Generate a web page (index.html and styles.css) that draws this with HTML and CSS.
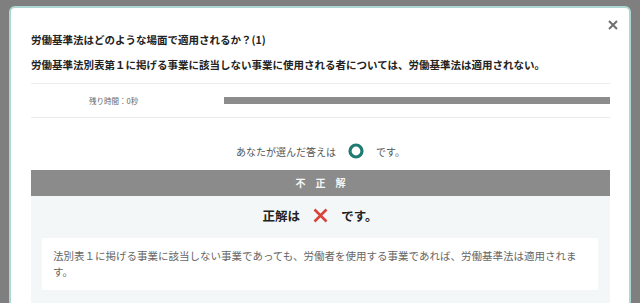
FILE: index.html
```html
<!DOCTYPE html>
<html lang="ja">
    <head>
        <meta charset="UTF-8">
        <title>労働基準法 一問一答</title>
        <link rel="stylesheet" href="styles.css">
    </head>
    <body>
        <div class="modal">
            <button class="close" aria-label="閉じる">
                <svg width="10" height="10" viewBox="0 0 10 10"><path d="M1 1L9 9M9 1L1 9" stroke="#6f6f6f" stroke-width="2" fill="none"/></svg>
            </button>
            <h2 class="title">労働基準法はどのような場面で適用されるか？(1)</h2>
            <p class="question">労働基準法別表第１に掲げる事業に該当しない事業に使用される者については、労働基準法は適用されない。</p>
            <div class="timer">
                <span class="timer-label">残り時間：0秒</span>
                <div class="timer-bar"></div>
            </div>
            <p class="your-answer">
                <span>あなたが選んだ答えは</span>
                <svg width="16" height="16" viewBox="0 0 16 16"><circle cx="8" cy="8" r="6" stroke="#1f7b71" stroke-width="3.2" fill="none"/></svg>
                <span>です。</span>
            </p>
            <div class="result-head">不正解</div>
            <div class="result">
                <p class="correct">
                    <span>正解は</span>
                    <svg width="15" height="15" viewBox="0 0 15 15"><path d="M1.5 1.5L13.5 13.5M13.5 1.5L1.5 13.5" stroke="#d8443a" stroke-width="2.6" fill="none"/></svg>
                    <span>です。</span>
                </p>
                <div class="explain">法別表１に掲げる事業に該当しない事業であっても、労働者を使用する事業であれば、労働基準法は適用されます。</div>
            </div>
        </div>
    </body>
</html>
```

FILE: styles.css
```css
* {
    box-sizing: border-box;
    font-family: "Noto Sans CJK JP", "Noto Sans", sans-serif;
}

body {
    margin: 0;
    padding: 6px 9px 0 9px;
    height: 303px;
    overflow: hidden;
    background: #7f7f7f;
}

.modal {
    position: relative;
    height: 420px;
    background: #fff;
    border: 2px solid #acd8d1;
    border-radius: 6px;
    padding: 24px 19px 0 20px;
}

.close {
    position: absolute;
    top: 12px;
    right: 11px;
    padding: 0;
    border: 0;
    background: none;
    cursor: pointer;
    line-height: 0;
}

.title {
    margin: 0;
    font-size: 10.5px;
    line-height: 16px;
    font-weight: bold;
    color: #222;
}

.question {
    margin: 9px 0 10px 0;
    font-size: 10.5px;
    line-height: 16px;
    font-weight: bold;
    color: #222;
}

.timer {
    display: flex;
    align-items: center;
    height: 35px;
    border-top: 1px solid #ececec;
    border-bottom: 1px solid #ececec;
}

.timer-label {
    width: 193px;
    padding-left: 58px;
    font-size: 7.5px;
    color: #666;
}

.timer-bar {
    flex: 1;
    height: 7px;
    background: #8c8c8c;
}

.your-answer {
    margin: 25px 0 11px 0;
    display: flex;
    justify-content: center;
    align-items: center;
    gap: 12px;
    height: 16px;
    font-size: 10px;
    color: #555;
}

.result-head {
    height: 26px;
    line-height: 26px;
    background: #8b8b8b;
    color: #f6f6f6;
    text-align: center;
    font-size: 10px;
    font-weight: bold;
    letter-spacing: 10px;
    padding-left: 10px;
}

.result {
    background: #f3f7f8;
    padding: 11px 12px 20px 11px;
}

.correct {
    margin: 0 0 15px 0;
    display: flex;
    justify-content: center;
    align-items: center;
    gap: 13px;
    height: 16px;
    font-size: 12.5px;
    font-weight: bold;
    color: #222;
}

.explain {
    background: #fff;
    padding: 10px 11px;
    font-size: 10.5px;
    line-height: 16px;
    color: #666;
}
```
